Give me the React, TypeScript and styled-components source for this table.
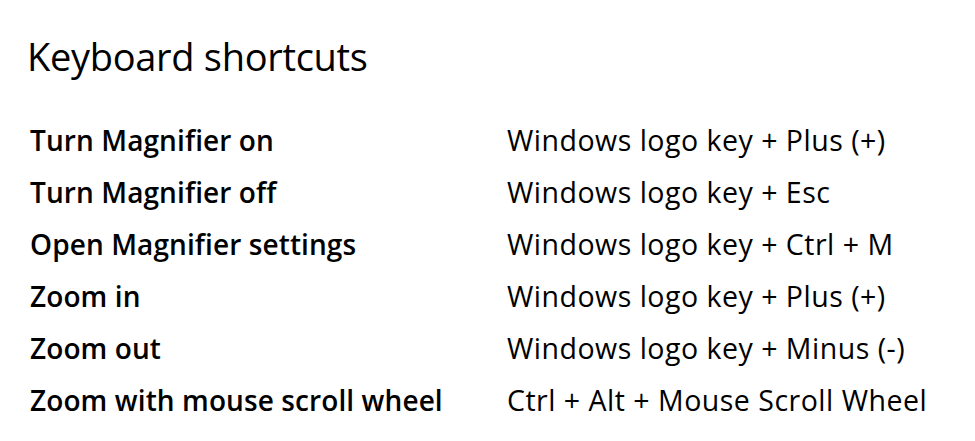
import React from "react";
import styled, { createGlobalStyle } from "styled-components";

const GlobalStyle = createGlobalStyle`
  html, body {
    margin: 0;
    padding: 0;
    background: #ffffff;
  }
  body {
    font-family: "Open Sans", "Noto Sans", "Liberation Sans", sans-serif;
    color: #000000;
  }
`;

const Page = styled.main`
  width: 975px;
  height: 441px;
  box-sizing: border-box;
  padding: 31px 0 0 27px;
  overflow: hidden;
`;

const Title = styled.h1`
  margin: 0 0 33px 0;
  font-size: 38px;
  font-weight: 400;
  line-height: 50px;
  letter-spacing: -0.3px;
`;

const Table = styled.div`
  display: grid;
  grid-template-columns: 477px auto;
  grid-auto-rows: 52px;
  align-items: center;
`;

const Cell = styled.div<{ $bold?: boolean }>`
  font-size: ${(p) => (p.$bold ? "28px" : "28.5px")};
  line-height: 52px;
  font-weight: ${(p) => (p.$bold ? 600 : 400)};
  letter-spacing: ${(p) => (p.$bold ? "0.1px" : "0.5px")};
  padding-left: 3px;
  white-space: nowrap;
`;

const shortcuts: [string, string][] = [
  ["Turn Magnifier on", "Windows logo key + Plus (+)"],
  ["Turn Magnifier off", "Windows logo key + Esc"],
  ["Open Magnifier settings", "Windows logo key + Ctrl + M"],
  ["Zoom in", "Windows logo key + Plus (+)"],
  ["Zoom out", "Windows logo key + Minus (-)"],
  ["Zoom with mouse scroll wheel", "Ctrl + Alt + Mouse Scroll Wheel"],
];

export default function App() {
  return (
    <>
      <GlobalStyle />
      <Page>
        <Title>Keyboard shortcuts</Title>
        <Table>
          {shortcuts.map(([action, keys]) => (
            <React.Fragment key={action}>
              <Cell $bold>{action}</Cell>
              <Cell>{keys}</Cell>
            </React.Fragment>
          ))}
        </Table>
      </Page>
    </>
  );
}
